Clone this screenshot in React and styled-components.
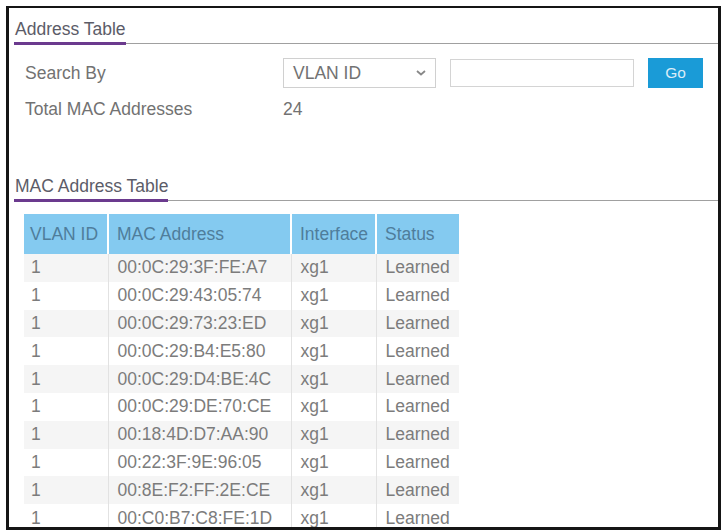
import React from "react"
import styled, { createGlobalStyle } from "styled-components"

const GlobalStyle = createGlobalStyle`
  html, body {
    margin: 0;
    padding: 0;
    background: #fff;
  }
  body {
    font-family: "Liberation Sans", Arial, sans-serif;
  }
`

const entries = [
  "00:0C:29:3F:FE:A7",
  "00:0C:29:43:05:74",
  "00:0C:29:73:23:ED",
  "00:0C:29:B4:E5:80",
  "00:0C:29:D4:BE:4C",
  "00:0C:29:DE:70:CE",
  "00:18:4D:D7:AA:90",
  "00:22:3F:9E:96:05",
  "00:8E:F2:FF:2E:CE",
  "00:C0:B7:C8:FE:1D",
]

const columns = [
  { title: "VLAN ID", width: 84 },
  { title: "MAC Address", width: 183 },
  { title: "Interface", width: 85 },
  { title: "Status", width: 83 },
]

const App = () => {
  return (
    <>
      <GlobalStyle />
      <Frame>
        <SectionHeader>
          <SectionTitle>Address Table</SectionTitle>
        </SectionHeader>

        <SearchForm>
          <Label>Search By</Label>
          <SelectBox>
            <span>VLAN ID</span>
            <Chevron viewBox="0 0 10 6">
              <path d="M1 1 L5 4.5 L9 1" fill="none" stroke="#888" strokeWidth="1.8" />
            </Chevron>
          </SelectBox>
          <TextInput type="text" />
          <BtnGo>Go</BtnGo>

          <Label>Total MAC Addresses</Label>
          <Label>24</Label>
        </SearchForm>

        <SectionHeader $top={57}>
          <SectionTitle>MAC Address Table</SectionTitle>
        </SectionHeader>

        <MacTable>
          <colgroup>
            {columns.map(c => (
              <col key={c.title} style={{ width: c.width }} />
            ))}
          </colgroup>
          <thead>
            <tr>
              {columns.map(c => (
                <Th key={c.title}>{c.title}</Th>
              ))}
            </tr>
          </thead>
          <tbody>
            {entries.map((mac, i) => (
              <Row key={mac} $shaded={i % 2 === 0}>
                <Td>1</Td>
                <Td>{mac}</Td>
                <Td>xg1</Td>
                <Td>Learned</Td>
              </Row>
            ))}
          </tbody>
        </MacTable>
      </Frame>
    </>
  )
}

export default App

const Frame = styled.div`
  box-sizing: border-box;
  width: 715px;
  height: 524px;
  margin: 6px 0 0 6px;
  border: 3px solid #151515;
  border-top-width: 2px;
  padding: 11px 0 0 5px;
  overflow: hidden;
  background: #fff;
`

const SectionHeader = styled.div`
  display: flex;
  margin-top: ${p => p.$top || 0}px;
  border-bottom: 1px solid #a0a0a0;
`

const SectionTitle = styled.div`
  font-size: 17.5px;
  line-height: 20px;
  color: #5c5c68;
  padding: 0 0 3px 1px;
  border-bottom: 3px solid #6b3a8e;
  margin-bottom: -2px;
`

const SearchForm = styled.div`
  display: grid;
  grid-template-columns: 244px 153px 184px 55px;
  column-gap: 14px;
  row-gap: 11px;
  align-items: center;
  margin: 14px 0 0 11px;
`

const Label = styled.div`
  font-size: 17.5px;
  line-height: 20px;
  color: #727272;
`

const SelectBox = styled.div`
  box-sizing: border-box;
  height: 30px;
  display: flex;
  align-items: center;
  justify-content: space-between;
  padding: 0 9px;
  border: 1px solid #d0d0d0;
  font-size: 17.5px;
  color: #727272;
`

const Chevron = styled.svg`
  width: 10px;
  height: 6px;
`

const TextInput = styled.input`
  box-sizing: border-box;
  height: 28px;
  border: 1px solid #d4d4d4;
  margin: 0;
  padding: 0 6px;
  &:focus {
    outline: none;
  }
`

const BtnGo = styled.button`
  box-sizing: border-box;
  height: 30px;
  border: none;
  background-color: #1a9bd7;
  color: #dcedf8;
  font-family: "Liberation Sans", Arial, sans-serif;
  font-size: 15.5px;
  cursor: pointer;
`

const MacTable = styled.table`
  border-collapse: collapse;
  table-layout: fixed;
  width: 435px;
  margin: 13px 0 0 10px;
  font-size: 17.5px;
`

const Th = styled.th`
  box-sizing: border-box;
  height: 40px;
  padding: 0 0 0 8px;
  text-align: left;
  font-weight: normal;
  color: #4f7d9b;
  background-color: #84caf0;
  border-left: 2px solid #fff;
  white-space: nowrap;
  &:first-child {
    border-left: none;
    padding-left: 6px;
  }
`

const Row = styled.tr`
  height: 27.8px;
  background-color: ${p => (p.$shaded ? "#f5f5f5" : "#fff")};
`

const Td = styled.td`
  box-sizing: border-box;
  padding: 0 0 0 9px;
  color: #7c7c7c;
  border-left: 1px solid #e2e2e2;
  white-space: nowrap;
  &:first-child {
    border-left: none;
    padding-left: 7px;
  }
`
